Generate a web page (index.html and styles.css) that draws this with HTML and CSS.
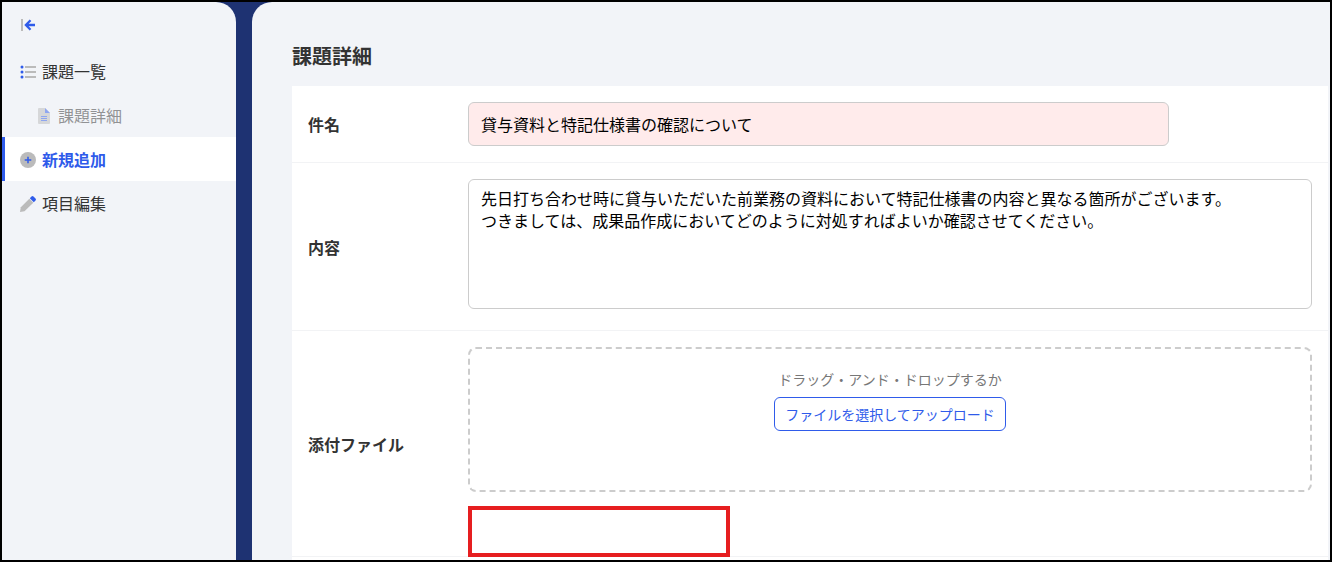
FILE: index.html
```html
<!DOCTYPE html>
<html lang="ja">
<head>
    <meta charset="UTF-8">
    <meta name="viewport" content="width=device-width, initial-scale=1.0">
    <title>課題詳細</title>
    <link rel="stylesheet" href="styles.css">
</head>
<body>
    <div class="layout">
        <nav class="sidebar">
            <button type="button" class="collapse" aria-label="メニューを閉じる">
                <svg width="16" height="16" viewBox="0 0 16 16" fill="none">
                    <path d="M2 2v12" stroke="#bbb" stroke-width="2"/>
                    <path d="M15 8H6.500M10.500 3.300L5.900 8l4.600 4.700" stroke="#2f5bea" stroke-width="2.300"/>
                </svg>
            </button>
            <a class="menu-item" href="#">
                <svg width="16" height="16" viewBox="0 0 16 16">
                    <path d="M5 3h11M5 8h11M5 13h11" stroke="#bbb" stroke-width="2"/>
                    <g fill="#2f5bea">
                        <circle cx="2" cy="3" r="1.500"/>
                        <circle cx="2" cy="8" r="1.500"/>
                        <circle cx="2" cy="13" r="1.500"/>
                    </g>
                </svg>
                課題一覧
            </a>
            <a class="menu-item sub" href="#">
                <svg width="16" height="16" viewBox="0 0 16 16">
                    <path d="M3 0h6l5 5v10a1 1 0 0 1-1 1H3a1 1 0 0 1-1-1V1a1 1 0 0 1 1-1z" fill="#bbb"/>
                    <path d="M9 0l5 5H9z" fill="#2f5bea"/>
                    <path d="M5 8.500h6M5 10.500h6M5 12.500h6" stroke="#2f5bea"/>
                </svg>
                課題詳細
            </a>
            <a class="menu-item active" href="#">
                <svg width="16" height="16" viewBox="0 0 16 16">
                    <circle cx="8" cy="8" r="8" fill="#bbb"/>
                    <path d="M8 4.700v6.600M4.700 8h6.600" stroke="#2f5bea" stroke-width="1.500"/>
                </svg>
                新規追加
            </a>
            <a class="menu-item" href="#">
                <svg width="16" height="16" viewBox="0 0 16 16">
                    <path d="M9.300 2.700l4 4L4.500 15.200L0 16l.8-4.700z" fill="#bbb"/>
                    <path d="M9.800 2.200L11.500.5a1.500 1.500 0 0 1 2 0l2 2a1.500 1.500 0 0 1 0 2l-1.700 1.700z" fill="#2f5bea"/>
                </svg>
                項目編集
            </a>
        </nav>

        <main class="content">
            <h1>課題詳細</h1>
            <form class="card">
                <div class="row">
                    <label for="subject">件名</label>
                    <div class="field">
                        <input type="text" id="subject" value="貸与資料と特記仕様書の確認について">
                    </div>
                </div>
                <div class="row">
                    <label for="detail">内容</label>
                    <div class="field">
                        <textarea id="detail">先日打ち合わせ時に貸与いただいた前業務の資料において特記仕様書の内容と異なる箇所がございます。
つきましては、成果品作成においてどのように対処すればよいか確認させてください。</textarea>
                    </div>
                </div>
                <div class="row">
                    <label for="upload">添付ファイル</label>
                    <div class="field">
                        <div class="dropzone">
                            <p>ドラッグ・アンド・ドロップするか</p>
                            <button type="button" id="upload">ファイルを選択してアップロード</button>
                        </div>
                        <div class="file-list">
                            <div class="highlight"></div>
                        </div>
                    </div>
                </div>
            </form>
        </main>
    </div>
</body>
</html>
```
FILE: styles.css
```css
* {
    box-sizing: border-box;
}
body {
    margin: 0;
    height: 100vh;
    overflow: hidden;
    border: 2px solid #000;
    background-color: #1e3272;
    color: #333;
    font-family: 'Noto Sans CJK JP', sans-serif;
    font-size: 16px;
}
.layout {
    display: flex;
    gap: 16px;
    height: 100%;
}
.sidebar {
    flex: 0 0 234px;
    background-color: #f2f4f8;
    border-top-right-radius: 20px;
}
.collapse {
    display: flex;
    align-items: center;
    height: 46px;
    margin-bottom: 1px;
    padding: 0 18px;
    border: none;
    background: none;
    cursor: pointer;
}
.menu-item {
    display: flex;
    align-items: center;
    gap: 6px;
    height: 44px;
    padding-left: 15px;
    border-left: 3px solid transparent;
    color: #333;
    line-height: 24px;
    text-decoration: none;
}
.menu-item svg {
    margin-top: 2px;
}
.menu-item.sub {
    padding-left: 31px;
    opacity: 0.5;
}
.menu-item.active {
    border-left-color: #2f5bea;
    background-color: #fff;
    color: #2f5bea;
    font-weight: bold;
}
.content {
    flex: 1;
    min-width: 0;
    padding: 40px 2px 0 40px;
    background-color: #f2f4f8;
    border-top-left-radius: 20px;
    overflow: hidden;
}
h1 {
    margin: 0 0 16px;
    font-size: 20px;
    line-height: 28px;
}
.card {
    min-height: 100%;
    background-color: #fff;
}
.row {
    display: flex;
    align-items: center;
    padding: 16px;
    border-bottom: 1px solid #f2f3f5;
}
.row label {
    flex: 0 0 160px;
    font-weight: bold;
    line-height: 24px;
}
.field {
    flex: 1;
}
input, textarea {
    display: block;
    border: 1px solid #ccc;
    border-radius: 6px;
    color: #000;
    font-family: inherit;
    font-size: 16px;
}
input {
    width: 83%;
    height: 44px;
    padding: 0 12px;
    background-color: #ffebeb;
}
textarea {
    width: 100%;
    height: 130px;
    margin-bottom: 5px;
    padding: 7px 12px;
    line-height: 22px;
    resize: none;
}
.dropzone {
    height: 145px;
    padding-top: 20px;
    border: 2px dashed #ccc;
    border-radius: 8px;
    text-align: center;
}
.dropzone p {
    margin: 0 0 8px;
    color: #777;
    font-size: 14px;
    line-height: 20px;
}
.dropzone button {
    height: 34px;
    padding: 0 10px;
    border: 1px solid #2f5bea;
    border-radius: 6px;
    background-color: #fff;
    color: #2f5bea;
    font-family: inherit;
    font-size: 14px;
    cursor: pointer;
}
.file-list {
    position: relative;
    height: 48px;
}
.highlight {
    position: absolute;
    top: 14px;
    left: 0;
    width: 262px;
    height: 51px;
    border: 4px solid #e61e20;
}
```
